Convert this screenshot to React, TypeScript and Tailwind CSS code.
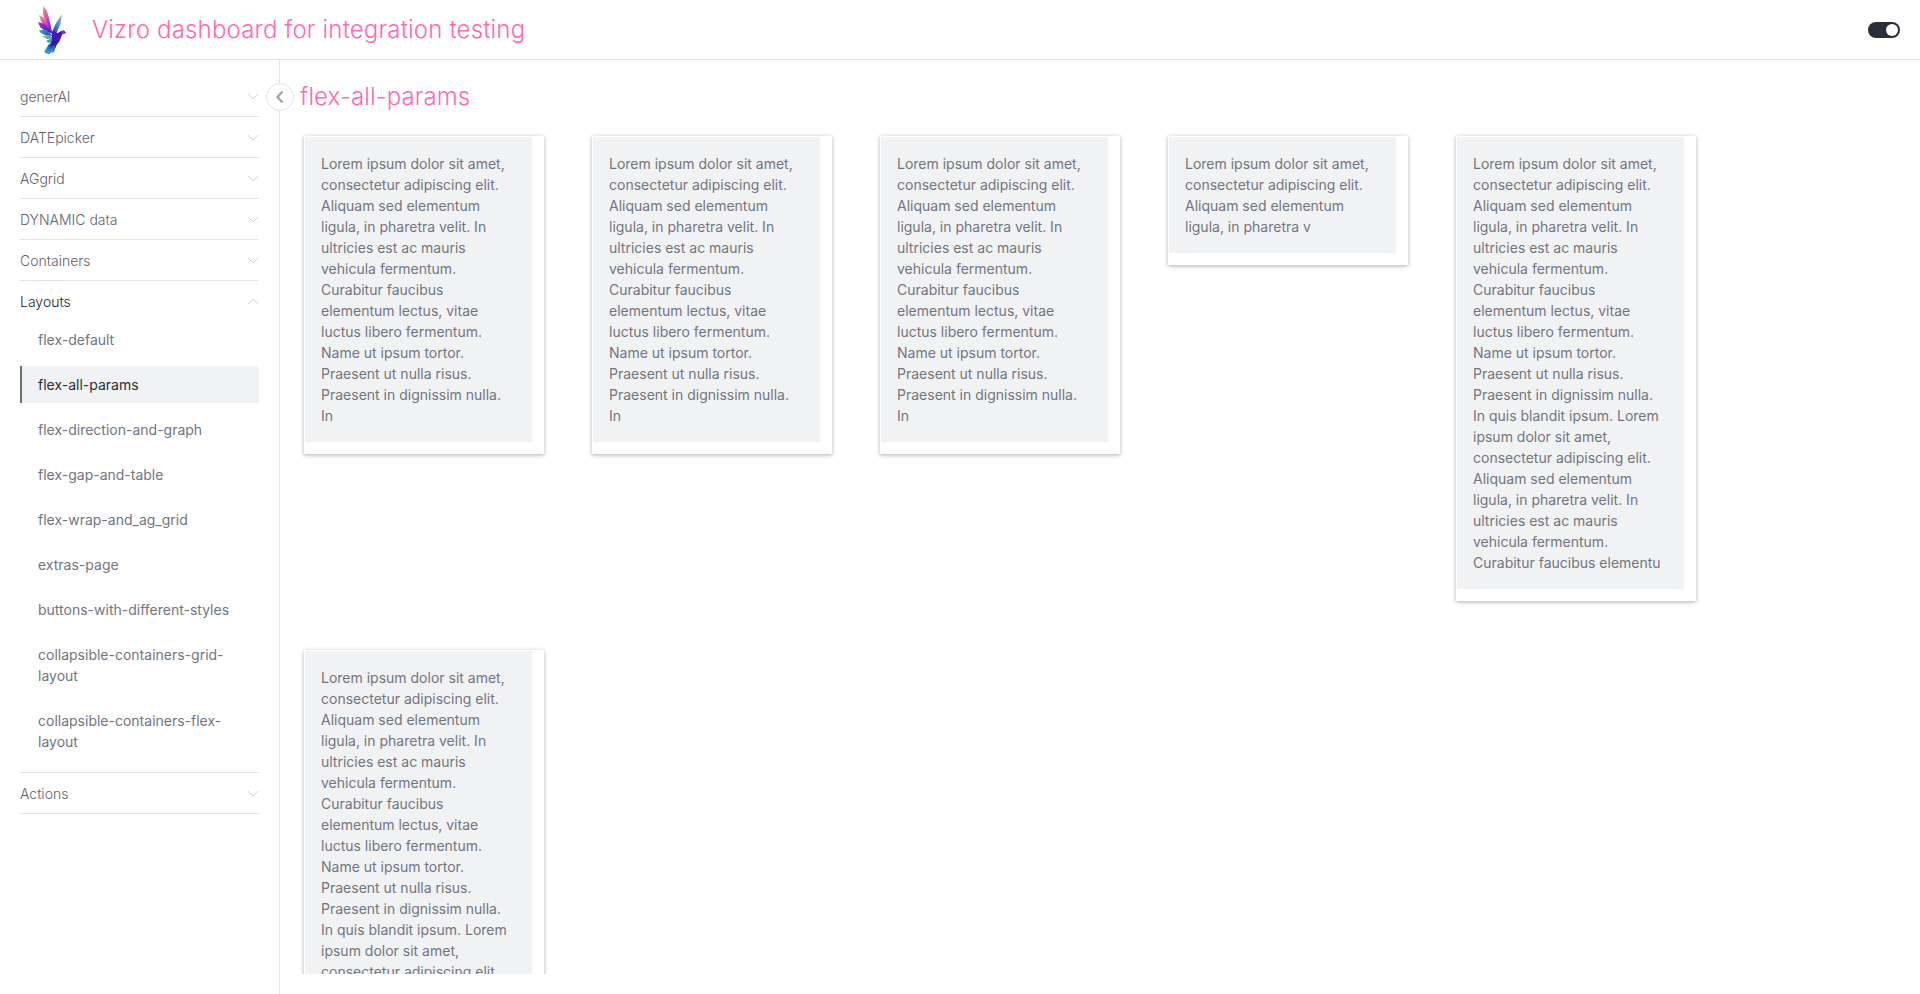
const P1 = "Lorem ipsum dolor sit amet, consectetur adipiscing elit. Aliquam sed elementum ligula, in pharetra velit. In ultricies est ac mauris vehicula fermentum. Curabitur faucibus elementum lectus, vitae luctus libero fermentum. Name ut ipsum tortor. Praesent ut nulla risus. Praesent in dignissim nulla. In";

const cards = [
  P1,
  P1,
  P1,
  "Lorem ipsum dolor sit amet, consectetur adipiscing elit. Aliquam sed elementum ligula, in pharetra v",
  P1 + " quis blandit ipsum. Lorem ipsum dolor sit amet, consectetur adipiscing elit. Aliquam sed elementum ligula, in pharetra velit. In ultricies est ac mauris vehicula fermentum. Curabitur faucibus elementu",
  P1 + " quis blandit ipsum. Lorem ipsum dolor sit amet, consectetur adipiscing elit. Aliquam sed elementum ligula, in pharetra velit. In ultricies est ac mauris vehicula fermentum.",
];

function Chevron({ up = false }: { up?: boolean }) {
  return (
    <svg width="12" height="7" viewBox="0 0 12 7" fill="none" className="shrink-0">
      <path d={up ? "M1 6L6 1L11 6" : "M1 1L6 6L11 1"} stroke="#d2d4d9" strokeWidth="1" />
    </svg>
  );
}

function Bird() {
  return (
    <svg width="28" height="48" viewBox="0 0 28 48" className="shrink-0">
      <defs>
        <linearGradient id="f1" x1="0" y1="0" x2="0.6" y2="1">
          <stop offset="0" stopColor="#f5a55c" />
          <stop offset="0.5" stopColor="#e050b8" />
          <stop offset="1" stopColor="#5a20c8" />
        </linearGradient>
        <linearGradient id="f2" x1="0" y1="0" x2="1" y2="1">
          <stop offset="0" stopColor="#b030d8" />
          <stop offset="1" stopColor="#3a18b0" />
        </linearGradient>
        <linearGradient id="f3" x1="0" y1="0" x2="1" y2="0.6">
          <stop offset="0" stopColor="#28c4a4" />
          <stop offset="1" stopColor="#3a30c0" />
        </linearGradient>
        <linearGradient id="f4" x1="0" y1="0" x2="1" y2="0.3">
          <stop offset="0" stopColor="#9ad648" />
          <stop offset="1" stopColor="#2a90c8" />
        </linearGradient>
        <linearGradient id="r1" x1="1" y1="0" x2="0" y2="1">
          <stop offset="0" stopColor="#f5a868" />
          <stop offset="0.35" stopColor="#48a8c8" />
          <stop offset="1" stopColor="#3a20b8" />
        </linearGradient>
        <linearGradient id="t1" x1="1" y1="0" x2="0" y2="1">
          <stop offset="0" stopColor="#3020b0" />
          <stop offset="1" stopColor="#30c8e0" />
        </linearGradient>
      </defs>
      <polygon points="24,8 22.5,18 18,28 14,26 17.5,18" fill="url(#r1)" />
      <polygon points="5,0 8.5,4 11,12 14,26 8,17 5,8" fill="url(#f1)" />
      <polygon points="1,9 6,12 10,18 15,28 7,21 3,15" fill="url(#f1)" />
      <polygon points="0,16 7,18 15,28 7,25 2,21" fill="url(#f2)" />
      <polygon points="1,24 8,24 15,30 7,29 3,27" fill="url(#f3)" />
      <polygon points="4,30 10,29 16,32 9,33" fill="url(#f4)" />
      <polygon points="8,35 14,32 17,35 11,37" fill="#2a9ed0" />
      <polygon points="14,25 20,27 23,25 26,24.5 28,27 24.5,28 21,36 16,40 14,33" fill="#4318b4" />
      <polygon points="23,25 26,24.5 28,27 24.5,28" fill="#9a28c4" />
      <polygon points="15,33 21,35 17,42 14,44 11,42 12,38" fill="#2a1cac" />
      <polygon points="11,38 14,40 9,48 6,46" fill="url(#t1)" />
      <polygon points="13,40 16,40 12,48 9,48" fill="url(#t1)" />
      <polygon points="15,39 18,40 16,46 12,47" fill="url(#t1)" />
    </svg>
  );
}

function AccordionHeader({ label, open = false }: { label: string; open?: boolean }) {
  return (
    <div className={`h-[41px] flex items-center justify-between font-light ${open ? "text-[#24262d]" : "text-[#5f626d] border-b border-[#e3e4e7]"}`}>
      <span>{label}</span>
      <Chevron up={open} />
    </div>
  );
}

const items = [
  "flex-default",
  "flex-all-params",
  "flex-direction-and-graph",
  "flex-gap-and-table",
  "flex-wrap-and_ag_grid",
  "extras-page",
  "buttons-with-different-styles",
  "collapsible-containers-grid-layout",
  "collapsible-containers-flex-layout",
];

export default function App() {
  return (
    <div className="h-[994px] w-[1920px] overflow-hidden bg-white flex flex-col text-[14px] leading-[21px] font-['Inter',sans-serif]">
      <header className="h-[60px] shrink-0 border-b border-[#e3e4e7] flex items-center pr-5">
        <div className="w-[62px] ml-5 h-full flex items-center justify-center pl-[2px] pr-[1px]">
          <Bird />
        </div>
        <h1 className="ml-[10px] text-[24px] leading-[36px] font-light tracking-[0.18px] text-[#ff69b4] flex-1">Vizro dashboard for integration testing</h1>
        <div className="w-8 h-4 rounded-full bg-[#2a2e3a] flex items-center justify-end pr-[2px]">
          <div className="w-3 h-3 rounded-full bg-white" />
        </div>
      </header>
      <div className="flex flex-1 min-h-0">
        <aside className="relative w-[280px] shrink-0 border-r border-[#e3e4e7] px-5 pt-4">
          {["generAI", "DATEpicker", "AGgrid", "DYNAMIC data", "Containers"].map((l) => (
            <AccordionHeader key={l} label={l} />
          ))}
          <AccordionHeader label="Layouts" open />
          <div className="flex flex-col gap-2 pb-3 border-b border-[#e3e4e7] -mt-px">
            {items.map((t) => (
              <div
                key={t}
                className={`py-2 pr-4 ${t === "flex-all-params" ? "pl-4 border-l-2 border-[#6c6f7a] bg-[#f1f2f4] text-[#2c2e36]" : "pl-[18px] text-[#72757f]"}`}
              >
                {t}
              </div>
            ))}
          </div>
          <AccordionHeader label="Actions" />
          <button className="absolute left-[266px] top-[23px] w-[28px] h-[28px] rounded-full bg-white border border-[#e3e4e7] flex items-center justify-center">
            <svg width="10" height="14" viewBox="0 0 10 14" fill="none">
              <path d="M7.5 1.5L2.5 7L7.5 12.5" stroke="#a4a6ac" strokeWidth="2.4" />
            </svg>
          </button>
        </aside>
        <main className="flex-1 min-w-0 flex flex-col px-5 pb-5">
          <h2 className="text-[24px] leading-[36px] font-light tracking-[0.12px] text-[#ff69b4] mt-[19px] mb-[16px]">flex-all-params</h2>
          <div className="flex-1 min-h-0 overflow-hidden flex flex-wrap content-start items-start gap-x-12 gap-y-[49px] pl-1 pt-[5px]">
            {cards.map((c, i) => (
              <div key={i} className="w-[240px] bg-white shadow-[0_1px_4px_rgba(20,23,33,0.35)] pt-px pl-px pb-3 pr-3">
                <div className="bg-[#f1f2f4] p-4 text-[#72757f]">{c}</div>
              </div>
            ))}
          </div>
        </main>
      </div>
    </div>
  );
}
